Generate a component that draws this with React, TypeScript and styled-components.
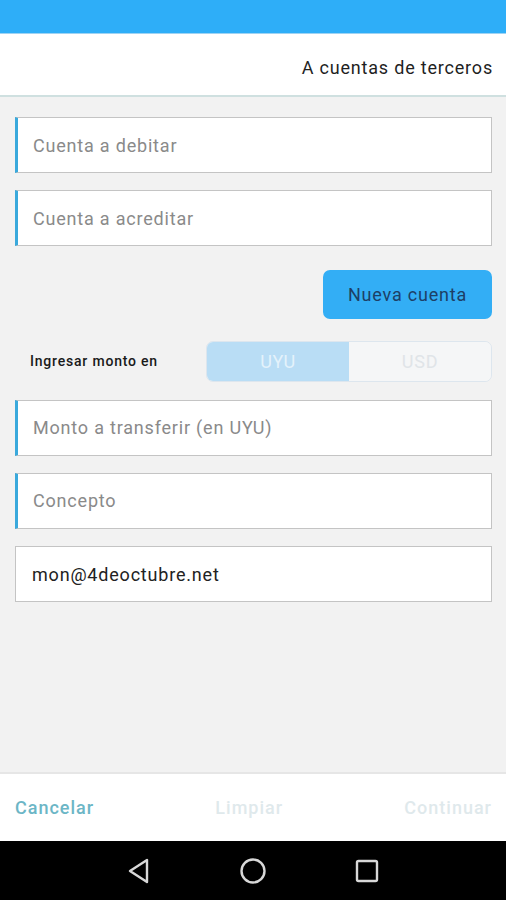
import React, { useState } from 'react';
import styled, { createGlobalStyle } from 'styled-components';

const GlobalStyle = createGlobalStyle`
  html, body {
    margin: 0;
    padding: 0;
    background: #f2f2f2;
  }
  * {
    box-sizing: border-box;
  }
  body {
    font-family: Roboto, "Noto Sans", sans-serif;
    letter-spacing: 0.8px;
  }
`;

const Screen = styled.div`
  width: 506px;
  height: 900px;
  display: flex;
  flex-direction: column;
  background: #f2f2f2;
  overflow: hidden;
`;

const StatusBar = styled.div`
  height: 33px;
  background: #2eaef8;
  flex-shrink: 0;
`;

const Header = styled.div`
  height: 64px;
  background: #ffffff;
  border-top: 1px solid #9fd3f3;
  border-bottom: 2px solid #cfe0e0;
  display: flex;
  align-items: center;
  justify-content: flex-end;
  padding: 6px 13px 0 0;
  font-size: 18px;
  color: #1f1f1f;
  flex-shrink: 0;
`;

const Form = styled.div`
  flex: 1;
  display: flex;
  flex-direction: column;
  padding: 20px 14px 0 15px;
`;

const Field = styled.div<{ $accent?: boolean; $filled?: boolean }>`
  height: 56px;
  background: #ffffff;
  border: 1px solid #c4c4c4;
  border-left: ${(p) => (p.$accent ? '3px solid #3aa9dc' : '1px solid #c4c4c4')};
  display: flex;
  align-items: center;
  padding-left: ${(p) => (p.$accent ? '15px' : '16px')};
  font-size: 18px;
  color: ${(p) => (p.$filled ? '#222222' : '#8a8a8a')};
  margin-bottom: 17.3px;
`;

const ButtonRow = styled.div`
  display: flex;
  justify-content: flex-end;
  margin: 6px 0 22px;
`;

const PrimaryButton = styled.button`
  width: 169px;
  height: 49px;
  border: none;
  border-radius: 7px;
  background: #33aef5;
  color: #1d3f66;
  font-family: Roboto, "Noto Sans", sans-serif;
  font-size: 18px;
  letter-spacing: 0.8px;
  cursor: pointer;
`;

const CurrencyRow = styled.div`
  display: flex;
  align-items: center;
  margin-bottom: 18px;
`;

const CurrencyLabel = styled.span`
  width: 191px;
  padding-left: 15px;
  font-size: 14px;
  font-weight: 500;
  letter-spacing: 0.8px;
  color: #1a1a1a;
`;

const Segmented = styled.div`
  flex: 1;
  height: 41px;
  display: flex;
  border: 1px solid #dde6ee;
  border-radius: 7px;
  overflow: hidden;
  background: #f5f6f7;
`;

const Segment = styled.button<{ $active?: boolean }>`
  flex: 1;
  border: none;
  background: ${(p) => (p.$active ? '#b9ddf5' : '#f5f6f7')};
  color: ${(p) => (p.$active ? '#e4f2fb' : '#e0e4e8')};
  font-family: Roboto, "Noto Sans", sans-serif;
  font-size: 18px;
  letter-spacing: 0.8px;
  cursor: pointer;
`;

const Footer = styled.div`
  height: 69px;
  background: #ffffff;
  border-top: 2px solid #e6e6e6;
  display: flex;
  align-items: center;
  justify-content: space-between;
  padding: 0 14px 0 15px;
  flex-shrink: 0;
`;

const FooterAction = styled.span<{ $enabled?: boolean }>`
  font-size: 18px;
  font-weight: 500;
  letter-spacing: 1px;
  color: ${(p) => (p.$enabled ? '#6cb6c6' : '#dfe9ec')};
`;

const NavBar = styled.div`
  height: 59px;
  background: #000000;
  display: flex;
  align-items: center;
  justify-content: center;
  gap: 88px;
  flex-shrink: 0;
`;

const NavIcon = styled.svg`
  width: 26px;
  height: 26px;
  fill: none;
  stroke: #d8d8d8;
  stroke-width: 2.4;
  stroke-linejoin: round;
`;

export default function App() {
  const [currency, setCurrency] = useState<'UYU' | 'USD'>('UYU');

  return (
    <Screen>
      <GlobalStyle />
      <StatusBar />
      <Header>A cuentas de terceros</Header>

      <Form>
        <Field $accent>Cuenta a debitar</Field>
        <Field $accent>Cuenta a acreditar</Field>

        <ButtonRow>
          <PrimaryButton>Nueva cuenta</PrimaryButton>
        </ButtonRow>

        <CurrencyRow>
          <CurrencyLabel>Ingresar monto en</CurrencyLabel>
          <Segmented>
            <Segment $active={currency === 'UYU'} onClick={() => setCurrency('UYU')}>
              UYU
            </Segment>
            <Segment $active={currency === 'USD'} onClick={() => setCurrency('USD')}>
              USD
            </Segment>
          </Segmented>
        </CurrencyRow>

        <Field $accent>Monto a transferir (en {currency})</Field>
        <Field $accent>Concepto</Field>
        <Field $filled>mon@4deoctubre.net</Field>
      </Form>

      <Footer>
        <FooterAction $enabled>Cancelar</FooterAction>
        <FooterAction>Limpiar</FooterAction>
        <FooterAction>Continuar</FooterAction>
      </Footer>

      <NavBar>
        <NavIcon viewBox="0 0 26 26">
          <path d="M21 2 L21 24 L4 13 Z" />
        </NavIcon>
        <NavIcon viewBox="0 0 26 26">
          <circle cx="13" cy="13" r="11.5" />
        </NavIcon>
        <NavIcon viewBox="0 0 26 26">
          <rect x="3" y="3" width="20" height="20" rx="1.5" />
        </NavIcon>
      </NavBar>
    </Screen>
  );
}
